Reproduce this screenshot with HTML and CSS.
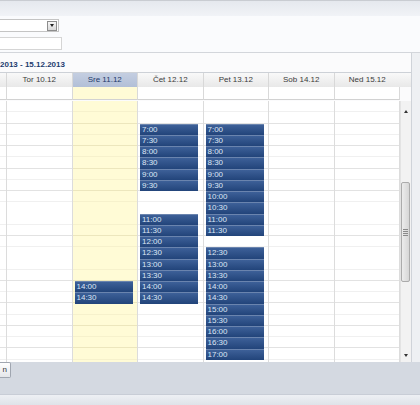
FILE: index.html
```html
<!DOCTYPE html>
<html>
<head>
<meta charset="utf-8">
<link rel="stylesheet" href="styles.css">
</head>
<body>
<div class="topline"></div>
<div class="band"></div>
<div class="form">
  <div class="select"><span class="dd"><i></i></span></div>
  <div class="input"></div>
</div>
<div class="main">
  <div class="cal">
    <div class="title">2013 - 15.12.2013</div>
    <div class="grid head">
      <div class="hc"></div>
      <div class="hc">Tor 10.12</div>
      <div class="hc today">Sre 11.12</div>
      <div class="hc">Čet 12.12</div>
      <div class="hc">Pet 13.12</div>
      <div class="hc">Sob 14.12</div>
      <div class="hc nob">Ned 15.12</div>
      <div class="hc nob"></div>
    </div>
    <div class="grid allday">
      <div class="ac"></div>
      <div class="ac"></div>
      <div class="ac today"></div>
      <div class="ac"></div>
      <div class="ac"></div>
      <div class="ac"></div>
      <div class="ac"></div>
      <div class="ac empty"></div>
    </div>
    <div class="grid body">
      <div class="col"></div>
      <div class="col"></div>
      <div class="col today">
        <div class="sp16"></div>
        <div class="grp">
          <div class="ev">14:00</div>
          <div class="ev">14:30</div>
        </div>
      </div>
      <div class="col">
        <div class="sp2"></div>
        <div class="grp">
          <div class="ev">7:00</div>
          <div class="ev">7:30</div>
          <div class="ev">8:00</div>
          <div class="ev">8:30</div>
          <div class="ev">9:00</div>
          <div class="ev">9:30</div>
        </div>
        <div class="sp2"></div>
        <div class="grp">
          <div class="ev">11:00</div>
          <div class="ev">11:30</div>
          <div class="ev">12:00</div>
          <div class="ev">12:30</div>
          <div class="ev">13:00</div>
          <div class="ev">13:30</div>
          <div class="ev">14:00</div>
          <div class="ev">14:30</div>
        </div>
      </div>
      <div class="col">
        <div class="sp2"></div>
        <div class="grp">
          <div class="ev">7:00</div>
          <div class="ev">7:30</div>
          <div class="ev">8:00</div>
          <div class="ev">8:30</div>
          <div class="ev">9:00</div>
          <div class="ev">9:30</div>
          <div class="ev">10:00</div>
          <div class="ev">10:30</div>
          <div class="ev">11:00</div>
          <div class="ev">11:30</div>
        </div>
        <div class="sp1"></div>
        <div class="grp">
          <div class="ev">12:30</div>
          <div class="ev">13:00</div>
          <div class="ev">13:30</div>
          <div class="ev">14:00</div>
          <div class="ev">14:30</div>
          <div class="ev">15:00</div>
          <div class="ev">15:30</div>
          <div class="ev">16:00</div>
          <div class="ev">16:30</div>
          <div class="ev">17:00</div>
        </div>
      </div>
      <div class="col"></div>
      <div class="col"></div>
      <div class="sb">
        <div class="sb-up"><i></i></div>
        <div class="sb-track"><div class="thumb"><span class="grip"></span></div></div>
        <div class="sb-down"><i></i></div>
      </div>
    </div>
  </div>
  <div class="gutter"></div>
</div>
<div class="footer"><div class="btn">n</div></div>
<div class="band2"></div>
</body>
</html>
```
FILE: styles.css
```css
html, body {
  margin: 0;
  padding: 0;
}
body {
  width: 420px;
  height: 405px;
  overflow: hidden;
  background: #f4f5f8;
  font-family: "Liberation Sans", Arial, sans-serif;
  font-size: 8px;
  color: #333;
}
.topline {
  height: 1px;
  background: #c9ccd2;
}
.band {
  height: 15px;
  background: linear-gradient(#e5e8ee, #f1f3f7);
}
.form {
  height: 37px;
  box-sizing: border-box;
  padding-top: 3px;
  background: #fafbfd;
  border-bottom: 1px solid #d3d6db;
}
.select {
  width: 59px;
  height: 13px;
  box-sizing: border-box;
  border: 1px solid #c4c4c4;
  border-left: none;
  background: #fff;
  display: flex;
  justify-content: flex-end;
  align-items: center;
  padding-right: 1px;
}
.dd {
  width: 10px;
  height: 10px;
  box-sizing: border-box;
  border: 1px solid #8d8d8d;
  background: linear-gradient(#f6f6f6, #d9d9d9);
  display: flex;
  align-items: center;
  justify-content: center;
}
.dd i {
  display: block;
  width: 0;
  height: 0;
  border-left: 2.5px solid transparent;
  border-right: 2.5px solid transparent;
  border-top: 3px solid #222;
}
.input {
  margin-top: 5px;
  width: 62px;
  height: 13px;
  box-sizing: border-box;
  border: 1px solid #d5d5d5;
  border-left: none;
  background: #fff;
}
.main {
  display: flex;
  height: 309px;
}
.cal {
  width: 411px;
  border-right: 1px solid #cfd3d9;
  background: #fbfbfc;
  display: flex;
  flex-direction: column;
}
.gutter {
  flex: 1;
  background: #eef0f3;
}
.title {
  height: 19px;
  box-sizing: border-box;
  padding-top: 7px;
  line-height: 10px;
  font-weight: bold;
  color: #1d3c6f;
  white-space: nowrap;
}
.grid {
  display: grid;
  grid-template-columns: 7px repeat(6, 65.5px) 11px;
}
.head {
  height: 15px;
  box-sizing: border-box;
  border-top: 1px solid #cdd1d7;
}
.hc {
  background: linear-gradient(#f9f9f9, #e8e8e8);
  border-right: 1px solid #d8d8d8;
  line-height: 14px;
  text-align: center;
  color: #3b3b3b;
  white-space: nowrap;
}
.hc.nob {
  border-right: none;
}
.hc.today {
  background: linear-gradient(#c4cee1, #b2bfd7);
  color: #21396a;
}
.allday {
  height: 13px;
  margin-bottom: 1px;
}
.ac {
  background: #fff;
  border-right: 1px solid #d9d9d9;
  border-bottom: 1px solid #d2d2d2;
}
.ac.today {
  background: #fffbd6;
}
.ac.empty {
  background: transparent;
  border: none;
}
.body {
  height: 261px;
  overflow: hidden;
  align-items: start;
}
.col {
  height: 261px;
  box-sizing: border-box;
  border-right: 1px solid #dcdcdc;
  background-color: #fff;
  background-image: repeating-linear-gradient(to bottom,
    transparent 0, transparent 10.25px,
    #f0f0f0 10.25px, #f0f0f0 11.25px,
    transparent 11.25px, transparent 21.5px,
    #e2e2e2 21.5px, #e2e2e2 22.5px);
  display: flex;
  flex-direction: column;
}
.col.today {
  background-color: #fffbd6;
  background-image: repeating-linear-gradient(to bottom,
    transparent 0, transparent 10.25px,
    #f6f1cc 10.25px, #f6f1cc 11.25px,
    transparent 11.25px, transparent 21.5px,
    #ece6bd 21.5px, #ece6bd 22.5px);
}
.sp1 { height: 11.25px; flex: none; }
.sp2 { height: 22.5px; flex: none; }
.sp16 { height: 180px; flex: none; }
.grp {
  margin-left: 2px;
  width: 58px;
  flex: none;
}
.ev {
  height: 11.25px;
  box-sizing: border-box;
  border-top: 1px solid #6a84ae;
  background: linear-gradient(#3d6098, #22447a);
  color: #dce6f5;
  padding-left: 2px;
  line-height: 10px;
  white-space: nowrap;
}
.sb {
  height: 261px;
  box-sizing: border-box;
  background: #f2f2f2;
  border-left: 1px solid #e3e3e3;
  display: flex;
  flex-direction: column;
}
.sb-up, .sb-down {
  display: flex;
  align-items: center;
  justify-content: center;
  flex: none;
}
.sb-up { height: 20px; }
.sb-down { height: 14px; }
.sb-up i {
  display: block;
  width: 0;
  height: 0;
  border-left: 2.5px solid transparent;
  border-right: 2.5px solid transparent;
  border-bottom: 3px solid #333;
}
.sb-down i {
  display: block;
  width: 0;
  height: 0;
  border-left: 2.5px solid transparent;
  border-right: 2.5px solid transparent;
  border-top: 3px solid #333;
}
.sb-track {
  flex: 1;
}
.thumb {
  margin-top: 61px;
  width: 9px;
  height: 100px;
  box-sizing: border-box;
  border: 1px solid #ababab;
  border-radius: 2px;
  background: linear-gradient(to right, #ececec, #d6d6d6);
  display: flex;
  align-items: center;
  justify-content: center;
}
.grip {
  display: block;
  width: 5px;
  height: 7px;
  background: repeating-linear-gradient(to bottom, #8a8a8a 0, #8a8a8a 1px, transparent 1px, transparent 2px);
}
.footer {
  height: 32px;
  background: #d4d9e1;
}
.btn {
  width: 11px;
  height: 16px;
  box-sizing: border-box;
  border: 1px solid #a0a6b0;
  border-left: none;
  border-radius: 0 2px 2px 0;
  background: linear-gradient(#ffffff, #e4e6ea);
  line-height: 14px;
  text-align: right;
  padding-right: 3px;
  color: #333;
}
.band2 {
  height: 11px;
  box-sizing: border-box;
  border-top: 1px solid #c8cdd6;
  background: linear-gradient(#eef0f4, #dfe3e9);
}
```
